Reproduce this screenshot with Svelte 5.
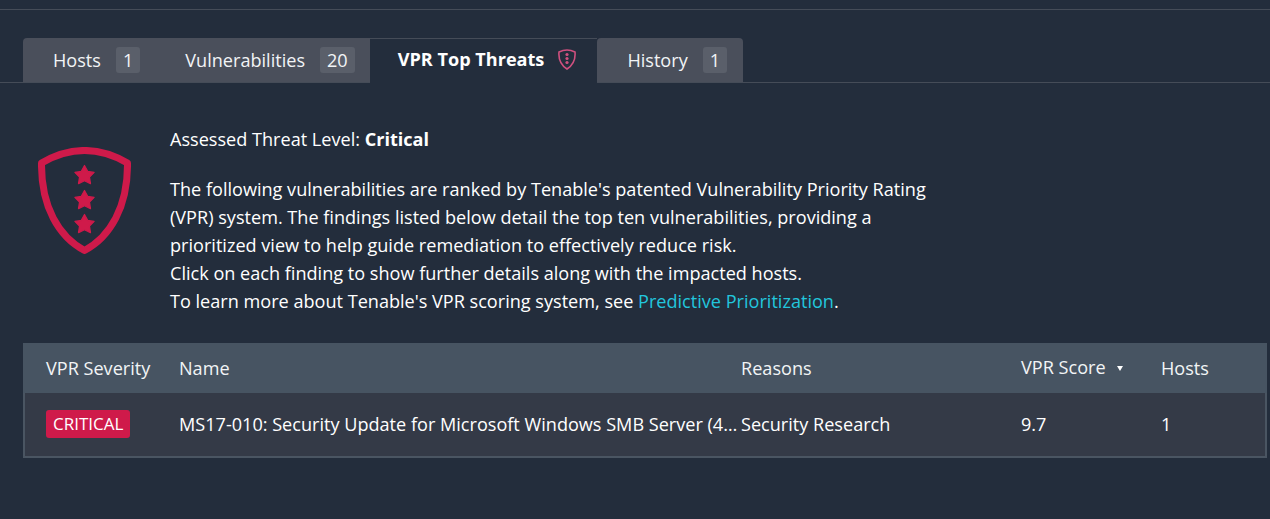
<script>
  const tabs = [
    { label: 'Hosts', count: 1 },
    { label: 'Vulnerabilities', count: 20 },
    { label: 'VPR Top Threats', active: true },
    { label: 'History', count: 1 }
  ]
  const columns = [
    { label: 'VPR Severity', cls: 'severity' },
    { label: 'Name', cls: 'name' },
    { label: 'Reasons', cls: 'reasons' },
    { label: 'VPR Score', cls: 'score', sorted: true },
    { label: 'Hosts', cls: 'hosts' }
  ]
  const star = 'M0 -9.5 L3.2 -3.6 L9.6 -2.6 L5 2.2 L6 8.6 L0 5.8 L-6 8.6 L-5 2.2 L-9.6 -2.6 L-3.2 -3.6 Z'
</script>

<main>
  <div class="tabs">
    {#each tabs as tab}
      <div class="tab" class:active={tab.active}>
        <span>{tab.label}</span>
        {#if tab.active}
          <svg class="mini" viewBox="0 0 20 22" width="20" height="22">
            <path d="M2 4 Q10 0 18 4 Q19 15 10 21 Q1 15 2 4 Z" fill="none" stroke="#d0507f" stroke-width="1.6" />
            <circle cx="10" cy="6.5" r="1.6" fill="#d0507f" />
            <circle cx="10" cy="10.5" r="1.6" fill="#d0507f" />
            <circle cx="10" cy="14.5" r="1.6" fill="#d0507f" />
          </svg>
        {:else}
          <span class="count">{tab.count}</span>
        {/if}
      </div>
    {/each}
  </div>

  <section class="intro">
    <svg class="shield" viewBox="0 0 93 107" width="93" height="107">
      <path d="M3.5 16 Q46.5 -9 89.5 16 C90 60 72 90 46.5 103.5 C21 90 3 60 3.5 16 Z" fill="none" stroke="#cf1a4a" stroke-width="7" stroke-linejoin="round" />
      <path d={star} transform="translate(46.5 28)" fill="#cf1a4a" stroke="#cf1a4a" stroke-width="1.2" stroke-linejoin="round" />
      <path d={star} transform="translate(46.5 53)" fill="#cf1a4a" stroke="#cf1a4a" stroke-width="1.2" stroke-linejoin="round" />
      <path d={star} transform="translate(46.5 77)" fill="#cf1a4a" stroke="#cf1a4a" stroke-width="1.2" stroke-linejoin="round" />
    </svg>
    <div class="copy">
      <p class="level">Assessed Threat Level: <strong>Critical</strong></p>
      <p>
        The following vulnerabilities are ranked by Tenable's patented Vulnerability Priority Rating<br />
        (VPR) system. The findings listed below detail the top ten vulnerabilities, providing a<br />
        prioritized view to help guide remediation to effectively reduce risk.<br />
        Click on each finding to show further details along with the impacted hosts.<br />
        To learn more about Tenable's VPR scoring system, see <a href="#vpr">Predictive Prioritization</a>.
      </p>
    </div>
  </section>

  <div class="table">
    <div class="row head">
      {#each columns as col}
        <div class="cell {col.cls}">
          {col.label}
          {#if col.sorted}<span class="caret"></span>{/if}
        </div>
      {/each}
    </div>
    <div class="row body">
      <div class="cell severity"><span class="badge">CRITICAL</span></div>
      <div class="cell name"><span class="clip">MS17-010: Security Update for Microsoft Windows SMB Server (4013389) (ETERNALBLUE)</span></div>
      <div class="cell reasons">Security Research</div>
      <div class="cell score">9.7</div>
      <div class="cell hosts">1</div>
    </div>
  </div>
</main>

<style>
  :global(body) {
    background: #232d3c;
  }
  main {
    height: 519px;
    box-sizing: border-box;
    overflow: hidden;
    font-family: "Open Sans", sans-serif;
    font-size: 18.1px;
    color: #fff;
  }
  main::before {
    content: "";
    display: block;
    height: 10px;
    border-bottom: 1px solid #454c58;
    box-sizing: border-box;
  }
  .tabs {
    display: flex;
    height: 45px;
    margin-top: 28px;
    padding-left: 23px;
    box-sizing: border-box;
    border-bottom: 1px solid #454c58;
  }
  .tab {
    display: flex;
    align-items: center;
    gap: 15px;
    height: 44px;
    box-sizing: border-box;
    padding: 0 15px 0 30px;
    background: #4a4f5b;
    color: #f2f4f6;
  }
  .tab:first-child {
    border-radius: 4px 0 0 0;
  }
  .tab:nth-child(4) {
    border-radius: 4px 4px 0 0;
    padding-right: 16px;
  }
  .tab.active {
    height: 45px;
    padding: 0 20px 4px 28px;
    gap: 13px;
    background: #232d3c;
    border-top: 1px solid #454c58;
    font-weight: 700;
    color: #fff;
  }
  .count {
    min-width: 24px;
    height: 26px;
    box-sizing: border-box;
    padding: 0 7px;
    border-radius: 3px;
    background: #5a5f6a;
    line-height: 27px;
    text-align: center;
  }
  .mini {
    display: block;
  }
  .intro {
    display: flex;
    margin-top: 42px;
    padding-left: 38px;
  }
  .shield {
    flex: none;
    margin-top: 22px;
  }
  .copy {
    margin-left: 39px;
    line-height: 28px;
  }
  .copy p {
    margin: 0;
    white-space: nowrap;
  }
  .copy .level {
    margin-bottom: 22px;
  }
  .copy a {
    color: #22c6dd;
    text-decoration: none;
  }
  .table {
    width: 1244px;
    margin: 28px 0 0 23px;
    border: 2px solid #4a5562;
    border-top: 0;
    box-sizing: border-box;
    background: #343a47;
  }
  .row {
    display: flex;
    align-items: center;
  }
  .row.head {
    height: 50px;
    margin: 0 -2px;
    background: #475462;
    color: #f2f4f6;
  }
  .row.body {
    height: 63px;
    box-sizing: border-box;
    padding-bottom: 1px;
    margin-left: -2px;
  }
  .cell {
    box-sizing: border-box;
    padding-left: 23px;
    white-space: nowrap;
  }
  .severity { width: 156px; }
  .name { width: 562px; padding-left: 0; display: flex; }
  .reasons { width: 280px; padding-left: 0; }
  .score { width: 140px; padding-left: 0; }
  .hosts { padding-left: 0; }
  .row.head .score {
    position: relative;
    top: -1px;
  }
  .clip {
    display: block;
    width: 562px;
    overflow: hidden;
    text-overflow: ellipsis;
  }
  .badge {
    display: inline-block;
    height: 28px;
    padding: 0 7px;
    border-radius: 3px;
    background: #cf1a4a;
    font-size: 17px;
    line-height: 28px;
  }
  .caret {
    display: inline-block;
    width: 0;
    height: 0;
    margin: 0 0 3px 7px;
    border: 3.5px solid transparent;
    border-top: 5px solid #fff;
    border-bottom: 0;
  }
</style>
